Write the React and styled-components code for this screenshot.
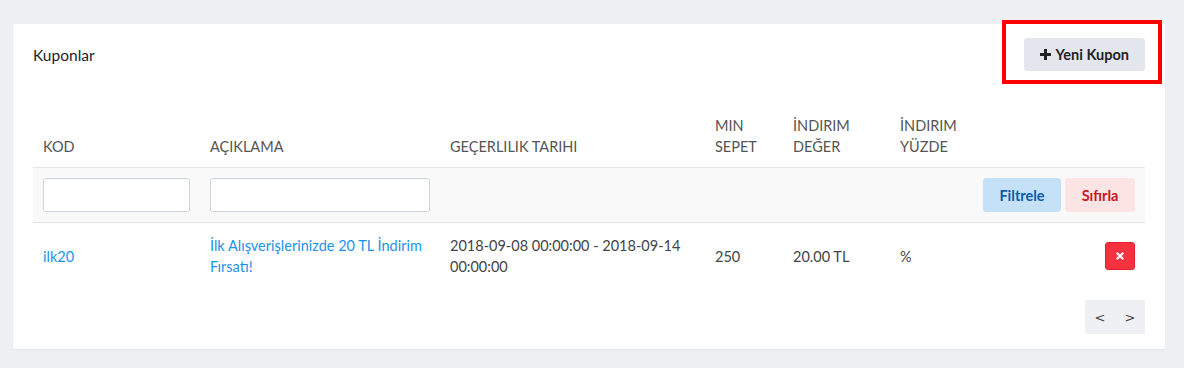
import styled, { createGlobalStyle } from "styled-components";

const Global = createGlobalStyle`
  body {
    margin: 0;
    padding: 24px 19px 19px 13px;
    background: #eff0f4;
    font-family: Lato, "Open Sans", sans-serif;
    font-size: 14.5px;
    color: #333;
  }
`;

const Card = styled.div`
  background: #fff;
  box-shadow: 0 1px 2px rgba(0, 0, 0, 0.06);
  padding: 14px 20px 15px 20px;
`;

const TopBar = styled.div`
  display: flex;
  justify-content: space-between;
  align-items: center;
`;

const Title = styled.div`
  font-size: 15.5px;
  color: #1e1e1e;
`;

const Highlight = styled.div`
  position: relative;
  &::after {
    content: "";
    position: absolute;
    left: -22px;
    right: -17px;
    top: -18px;
    bottom: -13px;
    border: 4px solid #ff0000;
    pointer-events: none;
  }
`;

const Button = styled.button`
  height: ${(p) => p.h || 34}px;
  width: ${(p) => (p.w ? `${p.w}px` : "auto")};
  padding: 0 ${(p) => p.px ?? 14}px;
  border: 1px solid ${(p) => p.border || p.bg};
  border-radius: 3px;
  background: ${(p) => p.bg};
  color: ${(p) => p.color};
  font-family: inherit;
  font-size: 14.5px;
  font-weight: 700;
  display: inline-flex;
  align-items: center;
  justify-content: center;
  gap: 5px;
  cursor: pointer;
`;

const Table = styled.table`
  width: 100%;
  border-collapse: collapse;
  margin-top: 24px;
  table-layout: fixed;
`;

const Th = styled.th`
  text-align: left;
  font-weight: 400;
  color: #555;
  text-transform: uppercase;
  line-height: 21px;
  padding: 20px 10px 10px;
  vertical-align: bottom;
  border-bottom: 1px solid #e3e5ec;
`;

const FilterRow = styled.tr`
  background: #f9f9fa;
  border-bottom: 1px solid #e3e5ec;
`;

const Td = styled.td`
  padding: ${(p) => p.pad || "12px 10px"};
  line-height: 21px;
  vertical-align: middle;
  color: #444;
  text-align: ${(p) => p.align || "left"};
`;

const Input = styled.input`
  width: 100%;
  height: 34px;
  box-sizing: border-box;
  border: 1px solid #cfd3dc;
  border-radius: 3px;
  background: #fff;
  outline: none;
`;

const ButtonGroup = styled.div`
  display: flex;
  justify-content: flex-end;
  gap: 4px;
`;

const LinkText = styled.a`
  color: #1d93e6;
  text-decoration: none;
`;

const Pager = styled.div`
  display: flex;
  justify-content: flex-end;
  margin-top: 11px;
`;

const PagerBox = styled.div`
  display: flex;
  background: #eff0f4;
  width: 60px;
  height: 34px;
  align-items: center;
  justify-content: center;
  gap: 19px;
  color: #444;
  font-family: "DejaVu Sans", sans-serif;
  font-size: 13px;
`;

function PlusIcon() {
  return (
    <svg width="11" height="11" viewBox="0 0 11 11">
      <path d="M4 0h3v4h4v3H7v4H4V7H0V4h4z" fill="#222" />
    </svg>
  );
}

function TimesIcon() {
  return (
    <svg width="8" height="8" viewBox="0 0 10 10">
      <path
        d="M1.8 0L5 3.2 8.2 0 10 1.8 6.8 5 10 8.2 8.2 10 5 6.8 1.8 10 0 8.2 3.2 5 0 1.8z"
        fill="#ffffff"
      />
    </svg>
  );
}

export default function App() {
  return (
    <>
      <Global />
      <Card>
        <TopBar>
          <Title>Kuponlar</Title>
          <Highlight>
            <Button bg="#e4e6ed" color="#222" px={15} h={33}>
              <PlusIcon />
              Yeni Kupon
            </Button>
          </Highlight>
        </TopBar>
        <Table>
          <colgroup>
            <col style={{ width: 167 }} />
            <col style={{ width: 240 }} />
            <col style={{ width: 265 }} />
            <col style={{ width: 78 }} />
            <col style={{ width: 107 }} />
            <col style={{ width: 80 }} />
            <col />
          </colgroup>
          <thead>
            <tr>
              <Th>Kod</Th>
              <Th>Açıklama</Th>
              <Th>Geçerlılık Tarıhı</Th>
              <Th>Min<br />Sepet</Th>
              <Th>İndırım<br />Değer</Th>
              <Th>İndırım<br />Yüzde</Th>
              <Th />
            </tr>
          </thead>
          <tbody>
            <FilterRow>
              <Td pad="10px 10px"><Input /></Td>
              <Td pad="10px 10px"><Input /></Td>
              <Td />
              <Td />
              <Td />
              <Td />
              <Td pad="10px 10px">
                <ButtonGroup>
                  <Button bg="#c4e1f8" color="#0f5ba4" px={0} w={78}>Filtrele</Button>
                  <Button bg="#fde4e4" color="#c8151f" px={0} w={70}>Sıfırla</Button>
                </ButtonGroup>
              </Td>
            </FilterRow>
            <tr>
              <Td><LinkText href="#">ilk20</LinkText></Td>
              <Td><LinkText href="#">İlk Alışverişlerinizde 20 TL İndirim Fırsatı!</LinkText></Td>
              <Td>2018-09-08 00:00:00 - 2018-09-14 00:00:00</Td>
              <Td>250</Td>
              <Td>20.00 TL</Td>
              <Td>%</Td>
              <Td align="right">
                <Button bg="#f7323f" border="#e0202c" color="#fff" px={0} h={28} w={30}>
                  <TimesIcon />
                </Button>
              </Td>
            </tr>
          </tbody>
        </Table>
        <Pager>
          <PagerBox>
            <span>&lt;</span>
            <span>&gt;</span>
          </PagerBox>
        </Pager>
      </Card>
    </>
  );
}
